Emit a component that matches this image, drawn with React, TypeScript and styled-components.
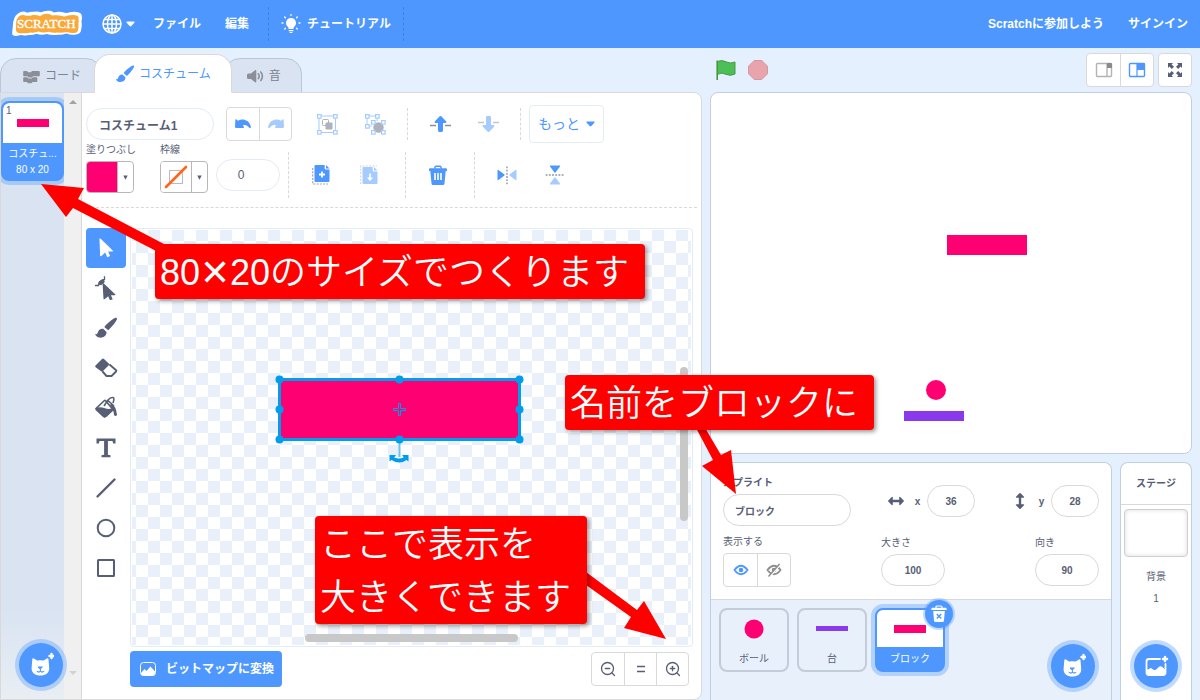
import React from "react";
import styled, { createGlobalStyle, css } from "styled-components";

const c = {
  blue: "#4d97ff",
  blueSoft: "#a6cbff",
  glow: "rgba(77, 151, 255, 0.35)",
  page: "#e5f0ff",
  text: "#575e75",
  line: "#d9d9d9",
  panelLine: "#c3cfe0",
  pink: "#ff0073",
  purple: "#8a3aed",
  red: "#ff0000",
  select: "#009dec",
};

const GlobalStyle = createGlobalStyle`
  * { box-sizing: border-box; }
  body {
    margin: 0;
    background: ${c.page};
    color: ${c.text};
    font-family: "Liberation Sans", "Noto Sans CJK JP", sans-serif;
    font-size: 12px;
    line-height: 16px;
  }
  button, input { font: inherit; color: inherit; margin: 0; }
  button { cursor: pointer; }
  svg { display: block; flex: none; }
`;

const Page = styled.div`
  position: relative;
  display: flex;
  flex-direction: column;
  height: 100vh;
  min-height: 640px;
  overflow: hidden;
`;

/* ---------- menu bar ---------- */
const MenuBar = styled.header`
  display: flex;
  align-items: center;
  flex: none;
  height: 48px;
  padding-left: 12px;
  background: ${c.blue};
  color: #fff;
`;
const MenuButton = styled.button`
  display: flex;
  align-items: center;
  gap: 6px;
  height: 48px;
  padding: 0 12px;
  border: 0;
  background: none;
  color: #fff;
  font-weight: bold;
  white-space: nowrap;
`;
const LogoLink = styled.a`
  margin-right: 8px;
`;
const LanguageButton = styled(MenuButton)`
  gap: 4px;
  padding-right: 6px;
`;
const MenuDivider = styled.span<{ $before?: boolean }>`
  height: 34px;
  margin-left: ${(p) => (p.$before ? 7 : 0)}px;
  border-left: 1px dashed rgba(0, 0, 0, 0.15);
`;
const Spacer = styled.span`
  flex: 1;
`;

/* ---------- main columns ---------- */
const Main = styled.main`
  display: flex;
  gap: 8px;
  flex: 1;
  min-height: 0;
  padding-right: 8px;
`;
const EditorColumn = styled.section`
  display: flex;
  flex-direction: column;
  flex: 1;
  min-width: 0;
`;
const StageColumn = styled.section`
  display: flex;
  flex-direction: column;
  flex: 0 0 482px;
`;
const Tabs = styled.div`
  display: flex;
  align-items: flex-end;
  flex: none;
  height: 44px;
`;
const Tab = styled.button<{ $selected?: boolean }>`
  display: flex;
  align-items: center;
  gap: 4px;
  height: 35px;
  margin-bottom: -1px;
  padding: 0 20px;
  border: 1px solid #b9c5d9;
  border-radius: 16px 16px 0 0;
  background: #d9e3f2;
  color: #7b8294;
  & + & { margin-left: -8px; }
  ${(p) =>
    p.$selected &&
    css`
      position: relative;
      z-index: 1;
      height: 39px;
      border-color: ${c.line};
      border-bottom-color: #fff;
      background: #fff;
      color: ${c.blue};
    `}
`;
const EditorPanel = styled.div`
  display: flex;
  flex: 1;
  min-height: 0;
  border: 1px solid ${c.line};
  border-radius: 0 8px 8px 0;
  background: #fff;
  overflow: hidden;
`;

/* ---------- costume selector ---------- */
const Selector = styled.aside`
  position: relative;
  display: flex;
  flex: 0 0 81px;
  border-right: 1px solid ${c.line};
`;
const CostumeList = styled.div`
  flex: 1;
  padding-top: 8px;
  background: linear-gradient(#d9e3f2 85%, #e8eef3);
  overflow: hidden;
`;
const CostumeItem = styled.button`
  display: flex;
  flex-direction: column;
  align-items: stretch;
  width: 100%;
  height: 80px;
  padding: 0;
  border: 2px solid ${c.blue};
  border-radius: 8px;
  background: ${c.blue};
  box-shadow: 0 0 0 4px ${c.glow};
  color: #fff;
  font-size: 10px;
  line-height: 16px;
  overflow: hidden;
`;
const CostumeThumb = styled.span`
  display: flex;
  flex-direction: column;
  align-items: center;
  height: 40px;
  margin-bottom: 3px;
  border-radius: 6px 6px 0 0;
  background: #fff;
  color: ${c.text};
`;
const CostumeNumber = styled.span`
  align-self: flex-start;
  padding-left: 3px;
`;
const Swatch = styled.span<{ $h: number; $color: string }>`
  width: 32px;
  height: ${(p) => p.$h}px;
  background: ${(p) => p.$color};
`;
const ScrollTrack = styled.div`
  display: flex;
  flex-direction: column;
  justify-content: space-between;
  align-items: center;
  flex: 0 0 17px;
  padding: 7px 0 24px;
  background: #f0f0f0;
`;
const Fab = styled.button`
  display: grid;
  place-items: center;
  width: 44px;
  height: 44px;
  padding: 0;
  border: 0;
  border-radius: 50%;
  background: ${c.blue};
  box-shadow: 0 0 0 4px ${c.glow};
`;
const SelectorFab = styled(Fab)`
  position: absolute;
  left: 18px;
  bottom: 12px;
`;

/* ---------- paint editor ---------- */
const Paint = styled.div`
  display: flex;
  flex-direction: column;
  flex: 1;
  min-width: 0;
  padding: 12px 4px;
`;
const TopRow = styled.div`
  display: flex;
  align-items: center;
  gap: 8px;
  flex: none;
  height: 38px;
`;
const SecondRow = styled.div`
  display: flex;
  align-items: center;
  flex: none;
  height: 65px;
  border-bottom: 1px dashed ${c.line};
`;
const pill = css`
  height: 32px;
  border: 1px solid ${c.line};
  border-radius: 16px;
  background: #fff;
  font-weight: bold;
`;
const NameInput = styled.input`
  ${pill}
  width: 128px;
  margin-right: 4px;
  padding: 0 12px;
  border-color: #e3ebf5;
`;
const StrokeInput = styled.input`
  ${pill}
  width: 64px;
  padding: 0 14px 0 0;
  margin-left: 8px;
  border-color: #e3ebf5;
  font-weight: normal;
  text-align: center;
`;
const ButtonGroup = styled.div<{ $after?: number }>`
  display: flex;
  flex: none;
  margin-right: ${(p) => p.$after ?? 0}px;
  border: 1px solid ${c.line};
  border-radius: 4px;
  background: #fff;
`;
const GroupButton = styled.button<{ $wide?: boolean }>`
  display: grid;
  place-items: center;
  width: ${(p) => (p.$wide ? 33 : 32)}px;
  height: 32px;
  padding: 0;
  border: 0;
  background: none;
  & + & { border-left: 1px solid ${c.line}; }
`;
const ToolPair = styled.div`
  display: flex;
`;
const ToolbarButton = styled.button`
  display: grid;
  place-items: center;
  width: 48px;
  height: 32px;
  padding: 0;
  border: 0;
  background: none;
`;
const Dashes = styled.span<{ $h: number; $l?: number; $r?: number }>`
  height: ${(p) => p.$h}px;
  margin: 0 ${(p) => p.$r ?? 0}px 0 ${(p) => p.$l ?? 0}px;
  border-left: 1px dashed ${c.line};
`;
const MoreButton = styled.button`
  display: flex;
  align-items: center;
  gap: 6px;
  height: 38px;
  padding: 0 8px;
  border: 1px solid #e3ebf5;
  border-radius: 4px;
  background: #fff;
  color: ${c.blue};
  font-size: 14px;
`;
const ColorField = styled.div<{ $wide?: boolean }>`
  display: flex;
  flex-direction: column;
  align-self: flex-start;
  gap: 5px;
  width: ${(p) => (p.$wide ? 74 : 48)}px;
`;
const FieldLabel = styled.label<{ $bold?: boolean }>`
  padding-top: 1px;
  font-size: 10px;
  line-height: 12px;
  font-weight: ${(p) => (p.$bold ? "bold" : "normal")};
  white-space: nowrap;
`;
const ColorButton = styled.button`
  display: flex;
  width: 48px;
  height: 32px;
  padding: 0;
  border: 1px solid #b8b8b8;
  border-radius: 4px;
  background: #fff;
  overflow: hidden;
`;
const ColorChip = styled.span<{ $color?: string }>`
  display: grid;
  place-items: center;
  width: 31px;
  height: 30px;
  border-right: 1px solid #b8b8b8;
  background: ${(p) => p.$color ?? "#fff"};
`;
const ColorArrow = styled.span`
  display: grid;
  place-items: center;
  flex: 1;
  height: 30px;
`;
const Workspace = styled.div`
  display: flex;
  gap: 4px;
  flex: 1;
  min-height: 0;
  padding: 20px 4px 0 0;
`;
const Tools = styled.div`
  display: flex;
  flex-direction: column;
  flex: 0 0 40px;
`;
const ToolButton = styled.button<{ $active?: boolean }>`
  display: grid;
  place-items: center;
  width: 40px;
  height: 40px;
  padding: 0;
  border: 0;
  border-radius: 4px;
  background: ${(p) => (p.$active ? c.blue : "none")};
`;
const Canvas = styled.div`
  position: relative;
  flex: 1;
  padding: 1px;
  border: 1px solid #e3ebf5;
  border-radius: 4px;
`;
const Checker = styled.div`
  height: 100%;
  background: repeating-conic-gradient(#fff 0 25%, #e9f0f9 0 50%) 16px -1px / 24px 24px;
`;
const Drawing = styled.svg`
  position: absolute;
  left: 144px;
  top: 146px;
`;
const ScrollThumb = styled.span<{ $vertical?: boolean }>`
  position: absolute;
  border-radius: 4px;
  background: #c8c8c8;
  ${(p) =>
    p.$vertical
      ? "right: 4px; top: 33%; width: 8px; height: 37%;"
      : "bottom: 4px; left: 31%; height: 8px; width: 38%;"}
`;
const CanvasControls = styled.div`
  display: flex;
  align-items: center;
  justify-content: space-between;
  flex: none;
  padding: 4px 8px 0 44px;
`;
const ConvertButton = styled.button`
  display: flex;
  align-items: center;
  gap: 8px;
  height: 36px;
  padding: 0 8px;
  border: 0;
  border-radius: 4px;
  background: ${c.blue};
  color: #fff;
  font-weight: bold;
  white-space: nowrap;
`;

/* ---------- stage ---------- */
const StageHeader = styled.div`
  display: flex;
  align-items: center;
  gap: 4px;
  flex: none;
  height: 44px;
  padding-left: 2px;
`;
const PlainButton = styled.button`
  display: grid;
  place-items: center;
  width: 28px;
  height: 28px;
  padding: 0;
  border: 0;
  background: none;
`;
const Stage = styled.div`
  flex: none;
  border: 1px solid ${c.panelLine};
  border-radius: 8px;
  background: #fff;
  overflow: hidden;
  svg { width: 100%; height: auto; }
`;
const Targets = styled.div`
  display: flex;
  gap: 8px;
  flex: 1;
  min-height: 0;
  padding-top: 8px;
`;
const SpritePanel = styled.div`
  position: relative;
  display: flex;
  flex-direction: column;
  flex: 1;
  border: 1px solid ${c.panelLine};
  border-bottom: 0;
  border-radius: 8px 8px 0 0;
  background: #e8f0fc;
  overflow: hidden;
`;
const SpriteInfo = styled.div`
  display: flex;
  flex-direction: column;
  gap: 9px;
  flex: none;
  padding: 13px 12px 12px;
  border-bottom: 1px solid ${c.line};
  background: #fff;
`;
const InfoRow = styled.div`
  display: flex;
  align-items: center;
  justify-content: space-between;
`;
const Field = styled.div`
  display: flex;
  flex-direction: column;
  gap: 5px;
`;
const InfoInput = styled.input<{ $w: number; $left?: boolean }>`
  ${pill}
  width: ${(p) => p.$w}px;
  padding: 0 ${(p) => (p.$left ? 11 : 4)}px;
  font-size: 10px;
  text-align: ${(p) => (p.$left ? "left" : "center")};
`;
const Axis = styled.div`
  display: grid;
  grid-template-columns: 24px 19px 48px;
  align-items: center;
  justify-items: center;
`;
const SpriteList = styled.div`
  display: flex;
  gap: 8px;
  padding: 8px;
`;
const SpriteItem = styled.button<{ $selected?: boolean }>`
  position: relative;
  display: flex;
  flex-direction: column;
  width: 70px;
  height: 64px;
  padding: 0;
  border: 2px solid #c3ccd9;
  border-radius: 8px;
  background: none;
  font-size: 10px;
  line-height: 23px;
  ${(p) =>
    p.$selected &&
    css`
      border-color: ${c.blue};
      background: ${c.blue};
      box-shadow: 0 0 0 4px ${c.glow};
      color: #fff;
    `}
`;
const SpriteThumb = styled.span<{ $selected?: boolean }>`
  display: grid;
  place-items: center;
  width: 100%;
  height: 37px;
  border-radius: 6px 6px 0 0;
  background: ${(p) => (p.$selected ? "#fff" : "none")};
`;
const SpriteName = styled.span`
  width: 100%;
  text-align: center;
`;
const SpriteSlot = styled.div`
  position: relative;
`;
const DeleteButton = styled.button`
  position: absolute;
  top: -8px;
  right: -8px;
  display: grid;
  place-items: center;
  width: 28px;
  height: 28px;
  padding: 0;
  border: 0;
  border-radius: 50%;
  background: ${c.blue};
  box-shadow: 0 0 0 2px ${c.glow};
`;
const SpriteFab = styled(Fab)`
  position: absolute;
  right: 16px;
  bottom: 12px;
`;
const StagePanel = styled.div`
  display: flex;
  flex-direction: column;
  align-items: center;
  flex: 0 0 72px;
  padding-bottom: 12px;
  border: 1px solid ${c.panelLine};
  border-bottom: 0;
  border-radius: 8px 8px 0 0;
  background: #fff;
  font-size: 10px;
`;
const StageTitle = styled.div`
  width: 100%;
  height: 42px;
  margin-bottom: 4px;
  border-bottom: 1px solid ${c.line};
  font-weight: bold;
  line-height: 42px;
  text-align: center;
`;
const Backdrop = styled.div`
  width: 64px;
  height: 48px;
  margin-bottom: 9px;
  border: 1px solid #d0d0d0;
  border-radius: 4px;
  box-shadow: inset 0 0 4px #d9d9d9;
`;
const BackdropText = styled.div`
  line-height: 22px;
`;
const StageFab = styled(Fab)`
  margin-top: auto;
`;

/* ---------- annotations ---------- */
const Arrows = styled.svg`
  position: absolute;
  left: 0;
  top: 0;
  pointer-events: none;
`;
const Callout = styled.p<{ $x: number; $y: number }>`
  position: absolute;
  left: ${(p) => p.$x}px;
  top: ${(p) => p.$y}px;
  margin: 0;
  padding: 2px 16px 0 5px;
  border-radius: 4px;
  background: ${c.red};
  box-shadow: 2px 2px 4px rgba(0, 0, 0, 0.4);
  color: #fff;
  font-family: "Liberation Sans", "Noto Sans CJK JP", sans-serif;
  font-weight: 350;
  font-size: 36px;
  line-height: 53px;
  white-space: nowrap;
`;
const Times = styled.span`
  font-family: "DejaVu Sans Light", "DejaVu Sans", sans-serif;
  font-weight: 200;
  line-height: 1;
`;

/* ---------- icons ---------- */
const Logo = () => (
  <svg width="70" height="28" viewBox="0 0 70 28">
    <path
      d="M6 3.500q5-3.500 9-.8 4-1.200 6.500-.9 4-.8 7.500.4Q33 .2 38 .8q3 .4 4 1.800 5-1.800 11 .2 3 .4 4.500-.6 6-1 9.500.3 3 1 2.800 3.700.7 2-.4 5 .8 3.500 0 7-.2 5.800-5.400 6.200-4.500 1-9.500-1-5 1.800-8.500 1.300-7.500.8-11-.8-6 1.600-10.500-.2-4 1.600-8 1.200-4 1.200-7.500.2-6 1.800-8.700-.4Q0 23 .8 16.500 1 6.500 6 3.500z"
      fill="#fff"
    />
    <path
      d="M8 5.500q3-1.200 6 .3 4 .3 7-.8 4-.4 7 1.200Q31 3.800 35 3.800q3 0 5 1.600 5-.8 11 .8 3 .6 5-.6 5-.9 8.500-.2 2.600.8 2 3.600.6 2-.1 4.500.4 4-.4 7-1 2.600-4 2.500-4 .3-7-1-5 1-10 .6-4 .6-8-.8-6 1.500-10.500-.2-4 1.600-8 1-4 1.200-7 .4-4 1-6-.4-2.200-1.400-1.400-5.800Q3.500 8 8 5.500z"
      fill="#f9a83a"
    />
    <text x="5" y="18" fill="#fff" stroke="#fff" strokeWidth=".4" fontFamily='"Liberation Serif", serif' fontSize="13">
      SCRATCH
    </text>
  </svg>
);
const Caret = ({ color = "#fff", w = 9 }: { color?: string; w?: number }) => (
  <svg width={w} height="6" viewBox="0 0 9 6">
    <path d="M1 .5h7q1 .3.4 1.2L5.3 5q-.8.8-1.6 0L.6 1.7Q0 .8 1 .5z" fill={color} />
  </svg>
);
const Triangle = ({ up, color = c.text }: { up?: boolean; color?: string }) => (
  <svg width="8" height="4" viewBox="0 0 8 4">
    <path d={up ? "M0 4L4 0l4 4z" : "M0 0h8L4 4z"} fill={color} />
  </svg>
);
const TinyArrow = () => (
  <svg width="5" height="5" viewBox="0 0 5 5"><path d="M.3.5h4.400L2.500 4.800z" fill={c.text} /></svg>
);
const Globe = () => (
  <svg width="20" height="20" viewBox="0 0 20 20" fill="none" stroke="#fff" strokeWidth="1.500">
    <circle cx="10" cy="10" r="9" />
    <ellipse cx="10" cy="10" rx="4.500" ry="9" />
    <path d="M10 1v18M1 10h18M2.500 5.500h15M2.500 14.500h15" />
  </svg>
);
const Bulb = () => (
  <svg width="20" height="20" viewBox="0 0 20 20">
    <path d="M10 4a5 5 0 0 1 3.200 8.800c-.6.6-.8 1.200-.8 2.200H7.600c0-1-.2-1.600-.8-2.200A5 5 0 0 1 10 4zM7.700 16h4.600v1.300H7.700zM8.600 18h2.800v1H8.600z" fill="#fff" />
    <path d="M10 .5v1M3.700 3l.7.7M16.300 3l-.7.7M1 9h1M18 9h1M3.700 15l.7-.7M16.300 15l-.7-.7" stroke="#fff" strokeWidth="1.300" strokeLinecap="round" />
  </svg>
);
const Blocks = () => (
  <svg width="20" height="20" viewBox="0 0 20 20" fill="#8b8f97">
    <path d="M3 5h3l1 1.300h3L11 5h7q.8 0 .8.800v3.700q0 .8-.8.800h-6l-1 1.200H7.500l-1-1.200H3q-.8 0-.8-.8V5.800Q2.200 5 3 5z" />
    <path d="M3 11.200h3.200l1 1.200h3.600l1-1.200h3.700q.8 0 .8.800v3.300q0 .8-.8.800h-4l-1 1.200H7l-1-1.200H3q-.8 0-.8-.8V12q0-.8.800-.8z" />
  </svg>
);
const BrushPath = () => (
  <>
    <path d="M22.600 1.400c.8.7.2 2-.6 3.200-2 3.200-4.700 6.500-7.800 9.200l-3.900-3.400c2.600-3.100 5.900-6 9.100-8.100 1.200-.8 2.500-1.500 3.200-.9z" />
    <path d="M9.200 12.300l3.300 3.200c.3 3.700-3 6-7 5.600-2-.2-3.500-1.400-4.500-3.400 1.500.3 2.400-.2 2.800-1.700.7-2.400 2.700-4.100 5.400-3.700z" />
  </>
);
const Brush = ({ color, size }: { color: string; size: number }) => (
  <svg width={size} height={size} viewBox="0 0 24 23" fill={color}><BrushPath /></svg>
);
const Speaker = () => (
  <svg width="20" height="20" viewBox="0 0 20 20">
    <path d="M3.500 7.500H6l4-3.300q1.300-.6 1.300.8v10.500q0 1.400-1.300.8L6 13H3.500Q2 13 2 11.500V9q0-1.500 1.500-1.500z" fill="#8b8f97" />
    <path d="M13.300 7.800q1.800 2.400 0 4.800M15.800 6q3.200 4.200 0 8.400" fill="none" stroke="#8b8f97" strokeWidth="1.600" strokeLinecap="round" />
  </svg>
);
const Undo = ({ redo }: { redo?: boolean }) => (
  <svg width="18" height="12" viewBox="0 0 18 12" fill={redo ? c.blueSoft : c.blue}>
    <path
      transform={redo ? "translate(18 0) scale(-1 1)" : undefined}
      d="M1.400 1.600q.6-.6 1.200 0l1.400 1.200C8 .4 14.800 1.300 16.800 8.500c.4 1.800-.9 2-1.600 1.200-2-2.600-4.300-3.200-6.300-2.200l1 1.200q.6 1-.5 1.400H2.200Q1.100 10 1 8.800z"
    />
  </svg>
);
const Nodes = ({ pts }: { pts: number[][] }) => (
  <>
    {pts.map(([x, y]) => (
      <rect key={`${x}-${y}`} x={x} y={y} width="3.500" height="3.500" fill="#fff" stroke={c.blueSoft} strokeWidth="1.200" />
    ))}
  </>
);
const GroupIcon = () => (
  <svg width="21" height="21" viewBox="0 0 21 21">
    <rect x="2" y="2" width="16.500" height="16.500" fill="none" stroke={c.blueSoft} />
    <rect x="5.500" y="5.500" width="6" height="6" rx="1" fill="#fff" stroke="#aeb2be" />
    <rect x="8.500" y="8.500" width="7" height="7" rx="1" fill="#aeb2be" />
    <Nodes pts={[[0.6, 0.6], [16.6, 0.6], [0.6, 16.6], [16.6, 16.6]]} />
  </svg>
);
const UngroupIcon = () => (
  <svg width="21" height="21" viewBox="0 0 21 21">
    <path d="M2 2h10v5M2 2v10h5" fill="none" stroke={c.blueSoft} />
    <circle cx="13.500" cy="13.500" r="5.200" fill="#aeb2be" />
    <Nodes pts={[[0.6, 0.6], [10.6, 0.6], [0.6, 10.6], [6.6, 6.6], [16.6, 6.6], [6.6, 16.6], [16.6, 16.6]]} />
  </svg>
);
const Layer = ({ down }: { down?: boolean }) => (
  <svg width="21" height="18" viewBox="0 0 21 18">
    <path d={down ? "M0 7.500h6M15 7.500h6" : "M0 10.500h6M15 10.500h6"} stroke={down ? "#c4c6ce" : "#8b8f9c"} strokeWidth="1.300" />
    <path
      transform={down ? "translate(0 18) scale(1 -1)" : undefined}
      d="M9.700 1.300q.8-.7 1.600 0l5 5.300q.7 1.400-.8 1.400H13v7.600q0 1.400-1.400 1.400H9.400Q8 17 8 15.600V8H5.500Q4 8 4.700 6.600z"
      fill={down ? c.blueSoft : c.blue}
    />
  </svg>
);
const PageIcon = ({ paste }: { paste?: boolean }) => {
  const main = paste ? c.blueSoft : c.blue;
  return (
    <svg width="20" height="22" viewBox="0 0 20 22">
      <path d={paste ? "M1.700 20V2H18" : "M1.700 4v16H17"} fill="none" stroke={paste ? "#d4d6dd" : "#a0a4b2"} strokeWidth="1.200" strokeDasharray="2 1.300" />
      <g transform={paste ? "translate(0 2)" : undefined}>
        <path d="M4.500 1h9.200v3.500q0 1 1 1h3.800v11.500q0 1-1 1h-13q-1 0-1-1V2q0-1 1-1z" fill={main} />
        <path d="M15 1l3.500 3.500h-3q-.5 0-.5-.5z" fill={main} />
        {paste ? (
          <path d="M10.200 7.500h1.600v4h2.200l-3 3.700-3-3.700h2.200z" fill="#fff" />
        ) : (
          <path d="M11 7.500v6M8 10.500h6" stroke="#fff" strokeWidth="1.800" />
        )}
      </g>
    </svg>
  );
};
const Trash = () => (
  <svg width="18" height="20" viewBox="0 0 18 20">
    <path d="M6 3.500V2.200q0-1 1-1h4q1 0 1 1v1.300" fill="none" stroke={c.blue} strokeWidth="1.500" />
    <path d="M1 3.200h16q1 0 1 1V6h-1.300l-1.200 12.500q-.2 1.500-1.500 1.500H4q-1.300 0-1.500-1.500L1.300 6H0V4.200q0-1 1-1z" fill={c.blue} />
    <path d="M6 8v7M9 8v7M12 8v7" stroke="#fff" strokeWidth="1.600" />
  </svg>
);
const Flip = ({ vertical }: { vertical?: boolean }) => (
  <svg width="20" height="20" viewBox="0 0 20 20">
    <g transform={vertical ? "rotate(90 10 10)" : undefined}>
      <path d="M.5 5.500q0-1 .9-.5l5.800 4.300q.9.700 0 1.400L1.400 15q-.9.500-.9-.5z" fill={c.blue} />
      <path d="M19.500 5.500q0-1-.9-.5l-5.800 4.300q-.9.700 0 1.400l5.800 4.300q.9.500.9-.5z" fill={c.blueSoft} />
      <path d="M10 1.500v18" stroke="#a9adb9" strokeWidth="1.800" strokeDasharray="1.800 1.400" />
    </g>
  </svg>
);
const NoColor = () => (
  <svg width="24" height="24" viewBox="0 0 24 24">
    <rect x="5.500" y="5.500" width="13" height="13" fill="none" stroke="#bbb" />
    <path d="M2 22L22 2" stroke="#ff661a" strokeWidth="2.600" strokeLinecap="round" />
  </svg>
);
const Svg24 = ({ children }: { children: React.ReactNode }) => (
  <svg width="24" height="24" viewBox="0 0 24 24">{children}</svg>
);
const Pointer = () => (
  <Svg24>
    <path d="M5.500 3.200q0-1.500 1.200-.5l12 11.800q.8 1-.4 1h-4.200l2 4.600-2.800 1.200-2.100-4.700-3.800 3.300q-1.300 1-1.300-.4z" fill="#fff" />
  </Svg24>
);
const Reshape = () => (
  <Svg24>
    <path d="M1 9.500h3.500Q5 4.500 10.500 3.500V.2" fill="none" stroke={c.text} strokeWidth="1.300" />
    <path d="M4 8.500l1-3.300L9.500 3l1.300 3-3.600 3.300z" fill={c.text} />
    <path d="M8.600 8q0-1.500 1.200-.5l11.400 10.700q.8 1-.4 1h-3.900l1.800 4-2.700 1.200-1.800-4.200-3.400 2.800q-1.300 1-1.300-.4z" fill={c.text} />
  </Svg24>
);
const Eraser = () => (
  <Svg24>
    <path d="M1.500 9.500L8 3q1-.9 2 0l6 5.800-7.500 7.400-6.900-5q-.9-.8-.1-1.700z" fill={c.text} />
    <path d="M8.500 15.500l4 4.500h5l4.600-4.500q.6-.7 0-1.300L15.500 8.500" fill="#fff" stroke={c.text} strokeWidth="1.900" strokeLinejoin="round" />
  </Svg24>
);
const Bucket = () => (
  <Svg24>
    <path d="M11 4L2 12.500l8.500 8 8.500-7-8-9.500" fill="none" stroke={c.text} strokeWidth="1.700" strokeLinejoin="round" />
    <path d="M3 11.500q4-.8 8 .8 4 1.500 7.500-.3l1 2.200-6.500 6.300q-2 2-4 .5L1.500 14q-.9-1.500 1.500-2.500z" fill={c.text} />
    <path d="M10 10l4-6q3-3.300 5.500-2.200 1 1-.5 5.200M13.500 4l6.500 6" fill="none" stroke={c.text} strokeWidth="1.600" />
    <path d="M17.500 7.500q4.500 2.500 5.500 11.500-1.500 2-3 0-.3-5.500-4-10z" fill={c.text} />
  </Svg24>
);
const TextTool = () => (
  <Svg24>
    <path d="M2.500 2.500h19V7.500h-2.300l-.7-2.500h-4.600v13.800l2.600.5v2h-9v-2l2.600-.5V5H5.500l-.7 2.500H2.500z" fill={c.text} />
  </Svg24>
);
const LineTool = () => (
  <Svg24><path d="M3.500 20.500l17-17" stroke={c.text} strokeWidth="2.400" strokeLinecap="round" /></Svg24>
);
const CircleTool = () => (
  <Svg24><circle cx="12" cy="12" r="8.300" fill="none" stroke={c.text} strokeWidth="2" /></Svg24>
);
const RectTool = () => (
  <Svg24><rect x="4" y="4" width="16" height="16" rx=".5" fill="none" stroke={c.text} strokeWidth="2" /></Svg24>
);
const Picture = () => (
  <svg width="20" height="20" viewBox="0 0 20 20">
    <rect x="2.500" y="3.500" width="15" height="13" rx="3" fill="none" stroke="#fff" />
    <path d="M3 14l3.500-4 2 2 4-4.500 4.500 5v2.500q-.5 1.500-2 1.500H5q-1.500 0-2-1.500z" fill="#fff" />
  </svg>
);
const Zoom = ({ plus }: { plus?: boolean }) => (
  <svg width="16" height="16" viewBox="0 0 16 16" fill="none" stroke={c.text} strokeWidth="1.300">
    <circle cx="7.500" cy="7.500" r="6" />
    <path d="M12 12l2.500 2.500M5.300 7.500h4.400" strokeLinecap="round" />
    {plus && <path d="M7.500 5.300v4.400" strokeLinecap="round" />}
  </svg>
);
const Equals = () => (
  <svg width="10" height="8" viewBox="0 0 10 8"><path d="M1 1.500h8M1 6.500h8" stroke={c.text} strokeWidth="1.500" /></svg>
);
const Flag = () => (
  <svg width="20" height="20" viewBox="0 0 20 20">
    <path d="M1.500 1.500q4.500-2 9 .5 4 2 8.500 0v12q-5 2.500-9 .3-4.500-2.300-8.500 0z" fill="#4cbf56" stroke="#45993d" />
    <path d="M1.200.5v19.500" stroke="#45993d" strokeWidth="1.600" />
  </svg>
);
const Stop = () => (
  <svg width="20" height="20" viewBox="0 0 20 20">
    <path d="M6.200.5h7.600l5.700 5.700v7.600l-5.700 5.700H6.200L.5 13.800V6.200z" fill="#e8a4ad" stroke="#d9949e" />
  </svg>
);
const Cat = () => (
  <svg width="26" height="26" viewBox="0 0 26 26">
    <path d="M4.300 7.200q.3-1.400 1.600-.6l3.200 2q3.300-.8 6.600 0l3.200-2q1.300-.8 1.600.6l.7 8.800c.3 5-3.800 7.500-8.800 7.500S3.300 21 3.600 16z" fill="#fff" />
    <path d="M10.400 15h4l-2 2zM12.400 17v2.500M9 19.500q2 1.500 3.400 0 1.500 1.500 3.600 0" fill={c.blue} stroke={c.blue} strokeWidth="1" strokeLinecap="round" />
    <path d="M23.500 2v4M21.500 4h4" stroke="#fff" strokeWidth="2.400" strokeLinecap="round" />
  </svg>
);
const BackdropIcon = () => (
  <svg width="26" height="26" viewBox="0 0 26 26">
    <path d="M17 6H6Q3.500 6 3.500 8.500v11Q3.500 22 6 22h14q2.500 0 2.500-2.500V11" fill="none" stroke="#fff" strokeWidth="1.800" strokeLinecap="round" />
    <path d="M3.500 17l4.500-2 2.500 1.800q2 .8 3.500-1l2-2q1.500-1.300 3 0l3.500 3v3.500q-.5 1.700-2.500 1.700H6q-2 0-2.500-1.700z" fill="#fff" />
    <path d="M22 4v4M20 6h4" stroke="#fff" strokeWidth="2.400" strokeLinecap="round" />
  </svg>
);
const DeleteIcon = () => (
  <svg width="16" height="18" viewBox="0 0 16 18">
    <path d="M5 3V2q0-1 1-1h4q1 0 1 1v1" fill="none" stroke="#fff" strokeWidth="1.200" />
    <path d="M1 2.800h14q.6 0 .6.600V5H.4V3.400q0-.6.600-.6zM2.200 6h11.600l-.8 9.500q-.2 1.500-1.500 1.500h-7Q3.200 17 3 15.500z" fill="#fff" />
    <path d="M5.800 9l4.400 4.400M10.200 9l-4.400 4.400" stroke={c.blue} strokeWidth="1.400" />
  </svg>
);
const StageSize = ({ large }: { large?: boolean }) => {
  const col = large ? c.blue : "#b3b3b3";
  return (
    <svg width="18" height="16" viewBox="0 0 18 16">
      <rect x="1.500" y="1.500" width="15" height="13" rx="1" fill="#fff" stroke={col} strokeWidth="1.400" />
      {large ? (
        <>
          <path d="M9 1.500v13" stroke={col} strokeWidth="1.200" />
          <path d="M9 1h7q1 0 1 1v6H9z" fill={col} />
        </>
      ) : (
        <>
          <path d="M12 1.500v13" stroke={col} strokeWidth="1.400" />
          <path d="M12 1h4q1 0 1 1v4h-5z" fill="#8a8a8a" />
        </>
      )}
    </svg>
  );
};
const Expand = () => (
  <svg width="16" height="16" viewBox="0 0 16 16" fill={c.text}>
    {[0, 90, 180, 270].map((a) => (
      <path key={a} transform={`rotate(${a} 8 8)`} d="M1 1h5L4.600 2.400 7 4.800 4.800 7 2.400 4.600 1 6z" />
    ))}
  </svg>
);
const DoubleArrow = ({ vertical }: { vertical?: boolean }) => (
  <svg width="16" height="16" viewBox="0 0 16 16">
    <path
      transform={vertical ? "rotate(90 8 8)" : undefined}
      d="M.3 7.400L3.700 4q1-.6 1.100.5v2.300h6.400V4.500q.1-1.100 1.100-.5l3.400 3.400q.5.600 0 1.200L12.300 12q-1 .6-1.100-.5V9.200H4.800v2.300q-.1 1.100-1.100.5L.3 8.600q-.5-.6 0-1.200z"
      fill={c.text}
    />
  </svg>
);
const Eye = ({ hidden }: { hidden?: boolean }) => {
  const col = hidden ? "#8f8f8f" : c.blue;
  return (
    <svg width="16" height="14" viewBox="0 0 16 14">
      <path d="M1.500 7Q8-1.500 14.500 7 8 15.500 1.500 7z" fill="none" stroke={col} strokeWidth="2" strokeLinejoin="round" />
      <circle cx="8" cy="7" r="2.300" fill={col} />
      {hidden && (
        <>
          <path d="M3.500 14L14 2" stroke="#fff" strokeWidth="1.500" />
          <path d="M2.500 13.500L13.500 1" stroke={col} strokeWidth="1.500" />
        </>
      )}
    </svg>
  );
};

const SelectedShape = () => (
  <Drawing width="250" height="96" viewBox="0 0 250 96" role="img" aria-label="ブロック">
    <rect x="4.500" y="4.500" width="240" height="60" fill={c.pink} stroke={c.select} strokeWidth="3" />
    <path d="M124.500 64v18" stroke="#66c4f4" strokeWidth="2" />
    <path
      d="M114.500 80h6.500l-1.800 2.500q5.300 2.200 9.600 0L127 80h6.500v6.500l-2-1.500q-7 5-15 0l-2 1.500z"
      fill={c.select}
    />
    <path d="M123.500 28.500h2v5h5v2h-5v5h-2v-5h-5v-2h5z" fill={c.pink} stroke={c.select} />
    {[4.5, 124.5, 244.5].flatMap((x) =>
      [4.5, 34.5, 64.5]
        .filter((y) => !(x === 124.5 && y === 34.5))
        .map((y) => <circle key={`${x}-${y}`} cx={x} cy={y} r="4" fill={c.select} />)
    )}
  </Drawing>
);

const tools: [string, React.ReactNode][] = [
  ["選択", <Pointer />],
  ["形を変える", <Reshape />],
  ["筆", <Brush color={c.text} size={24} />],
  ["消しゴム", <Eraser />],
  ["塗りつぶし", <Bucket />],
  ["テキスト", <TextTool />],
  ["直線", <LineTool />],
  ["円", <CircleTool />],
  ["四角形", <RectTool />],
];

const Header = () => (
  <MenuBar>
    <LogoLink href="#home"><Logo /></LogoLink>
    <LanguageButton aria-label="言語"><Globe /><Caret /></LanguageButton>
    <MenuButton>ファイル</MenuButton>
    <MenuButton>編集</MenuButton>
    <MenuDivider $before />
    <MenuButton><Bulb />チュートリアル</MenuButton>
    <MenuDivider />
    <Spacer />
    <MenuButton>Scratchに参加しよう</MenuButton>
    <MenuButton>サインイン</MenuButton>
  </MenuBar>
);

const CostumeSelector = () => (
  <Selector>
    <CostumeList>
      <CostumeItem>
        <CostumeThumb>
          <CostumeNumber>1</CostumeNumber>
          <Swatch $h={8} $color={c.pink} />
        </CostumeThumb>
        <span>コスチュ...</span>
        <span>80 x 20</span>
      </CostumeItem>
    </CostumeList>
    <ScrollTrack>
      <Triangle up color="#a3a3a3" />
      <Triangle color="#d0d3d6" />
    </ScrollTrack>
    <SelectorFab aria-label="コスチュームを選ぶ"><Cat /></SelectorFab>
  </Selector>
);

const PaintEditor = () => (
  <Paint>
    <TopRow>
      <NameInput aria-label="コスチューム" defaultValue="コスチューム1" />
      <ButtonGroup $after={3}>
        <GroupButton aria-label="取り消し"><Undo /></GroupButton>
        <GroupButton aria-label="やり直し"><Undo redo /></GroupButton>
      </ButtonGroup>
      <ToolPair>
        <ToolbarButton aria-label="グループ化"><GroupIcon /></ToolbarButton>
        <ToolbarButton aria-label="グループ解除"><UngroupIcon /></ToolbarButton>
      </ToolPair>
      <Dashes $h={32} />
      <ToolPair>
        <ToolbarButton aria-label="手前に出す"><Layer /></ToolbarButton>
        <ToolbarButton aria-label="奥に下げる"><Layer down /></ToolbarButton>
      </ToolPair>
      <Dashes $h={32} />
      <MoreButton>もっと<Caret color={c.blue} /></MoreButton>
    </TopRow>
    <SecondRow>
      <ColorField $wide>
        <FieldLabel htmlFor="fill">塗りつぶし</FieldLabel>
        <ColorButton id="fill"><ColorChip $color={c.pink} /><ColorArrow><TinyArrow /></ColorArrow></ColorButton>
      </ColorField>
      <ColorField>
        <FieldLabel htmlFor="outline">枠線</FieldLabel>
        <ColorButton id="outline"><ColorChip><NoColor /></ColorChip><ColorArrow><TinyArrow /></ColorArrow></ColorButton>
      </ColorField>
      <StrokeInput aria-label="枠線の太さ" defaultValue="0" />
      <Dashes $h={46} $l={8} $r={8} />
      <ToolbarButton aria-label="コピー"><PageIcon /></ToolbarButton>
      <ToolbarButton aria-label="貼り付け"><PageIcon paste /></ToolbarButton>
      <Dashes $h={46} $l={12} $r={8} />
      <ToolbarButton aria-label="削除"><Trash /></ToolbarButton>
      <Dashes $h={46} $l={12} $r={8} />
      <ToolbarButton aria-label="左右反転"><Flip /></ToolbarButton>
      <ToolbarButton aria-label="上下反転"><Flip vertical /></ToolbarButton>
    </SecondRow>
    <Workspace>
      <Tools>
        {tools.map(([name, icon], i) => (
          <ToolButton key={name} aria-label={name} $active={i === 0}>{icon}</ToolButton>
        ))}
      </Tools>
      <Canvas>
        <Checker />
        <SelectedShape />
        <ScrollThumb $vertical />
        <ScrollThumb />
      </Canvas>
    </Workspace>
    <CanvasControls>
      <ConvertButton><Picture />ビットマップに変換</ConvertButton>
      <ButtonGroup>
        <GroupButton aria-label="縮小"><Zoom /></GroupButton>
        <GroupButton aria-label="等倍"><Equals /></GroupButton>
        <GroupButton aria-label="拡大"><Zoom plus /></GroupButton>
      </ButtonGroup>
    </CanvasControls>
  </Paint>
);

const SpriteArea = () => (
  <SpritePanel>
    <SpriteInfo>
      <InfoRow>
        <Field>
          <FieldLabel $bold htmlFor="sprite">スプライト</FieldLabel>
          <InfoInput id="sprite" $w={128} $left defaultValue="ブロック" />
        </Field>
        <Axis>
          <DoubleArrow />
          <FieldLabel $bold htmlFor="pos-x">x</FieldLabel>
          <InfoInput id="pos-x" $w={48} defaultValue="36" />
        </Axis>
        <Axis>
          <DoubleArrow vertical />
          <FieldLabel $bold htmlFor="pos-y">y</FieldLabel>
          <InfoInput id="pos-y" $w={48} defaultValue="28" />
        </Axis>
      </InfoRow>
      <InfoRow>
        <Field>
          <FieldLabel htmlFor="show">表示する</FieldLabel>
          <ButtonGroup>
            <GroupButton $wide id="show"><Eye /></GroupButton>
            <GroupButton $wide aria-label="隠す"><Eye hidden /></GroupButton>
          </ButtonGroup>
        </Field>
        <Field>
          <FieldLabel htmlFor="size">大きさ</FieldLabel>
          <InfoInput id="size" $w={64} defaultValue="100" />
        </Field>
        <Field>
          <FieldLabel htmlFor="direction">向き</FieldLabel>
          <InfoInput id="direction" $w={64} defaultValue="90" />
        </Field>
      </InfoRow>
    </SpriteInfo>
    <SpriteList>
      <SpriteItem>
        <SpriteThumb>
          <svg width="20" height="20" viewBox="0 0 20 20"><circle cx="10" cy="10" r="9.500" fill={c.pink} /></svg>
        </SpriteThumb>
        <SpriteName>ボール</SpriteName>
      </SpriteItem>
      <SpriteItem>
        <SpriteThumb><Swatch $h={5} $color={c.purple} /></SpriteThumb>
        <SpriteName>台</SpriteName>
      </SpriteItem>
      <SpriteSlot>
        <SpriteItem $selected>
          <SpriteThumb $selected><Swatch $h={8} $color={c.pink} /></SpriteThumb>
          <SpriteName>ブロック</SpriteName>
        </SpriteItem>
        <DeleteButton aria-label="削除"><DeleteIcon /></DeleteButton>
      </SpriteSlot>
    </SpriteList>
    <SpriteFab aria-label="スプライトを選ぶ"><Cat /></SpriteFab>
  </SpritePanel>
);

export default function App() {
  return (
    <Page>
      <GlobalStyle />
      <Header />
      <Main>
        <EditorColumn>
          <Tabs>
            <Tab><Blocks />コード</Tab>
            <Tab $selected><Brush color={c.blue} size={20} />コスチューム</Tab>
            <Tab><Speaker />音</Tab>
          </Tabs>
          <EditorPanel>
            <CostumeSelector />
            <PaintEditor />
          </EditorPanel>
        </EditorColumn>
        <StageColumn>
          <StageHeader>
            <PlainButton aria-label="実行"><Flag /></PlainButton>
            <PlainButton aria-label="止める"><Stop /></PlainButton>
            <Spacer />
            <ButtonGroup>
              <GroupButton $wide aria-label="小さいステージ"><StageSize /></GroupButton>
              <GroupButton $wide aria-label="大きいステージ"><StageSize large /></GroupButton>
            </ButtonGroup>
            <ButtonGroup>
              <GroupButton aria-label="全画面"><Expand /></GroupButton>
            </ButtonGroup>
          </StageHeader>
          <Stage>
            <svg viewBox="0 0 480 360" role="img" aria-label="ステージ">
              <rect x="236" y="142" width="80" height="20" fill={c.pink} />
              <circle cx="225" cy="297" r="10" fill={c.pink} />
              <rect x="193" y="318" width="60" height="10" fill={c.purple} />
            </svg>
          </Stage>
          <Targets>
            <SpriteArea />
            <StagePanel>
              <StageTitle>ステージ</StageTitle>
              <Backdrop />
              <BackdropText>背景</BackdropText>
              <BackdropText>1</BackdropText>
              <StageFab aria-label="背景を選ぶ"><BackdropIcon /></StageFab>
            </StagePanel>
          </Targets>
        </StageColumn>
      </Main>
      <Arrows width="1200" height="700" viewBox="0 0 1200 700" fill={c.red}>
        <path d="M41 184L84 188 78 199 164 244 160 253 73 208 66 217z" />
        <path d="M736 494L731 450 721 455 704 426 695 426 713 460 702 466z" />
        <path d="M666 639L644 601 637 610 586 572 586 585 631 617 624 628z" />
      </Arrows>
      <Callout $x={155} $y={244}>80<Times>✕</Times>20のサイズでつくります</Callout>
      <Callout $x={565} $y={375}>名前をブロックに</Callout>
      <Callout $x={315} $y={516}>ここで表示を<br />大きくできます</Callout>
    </Page>
  );
}
